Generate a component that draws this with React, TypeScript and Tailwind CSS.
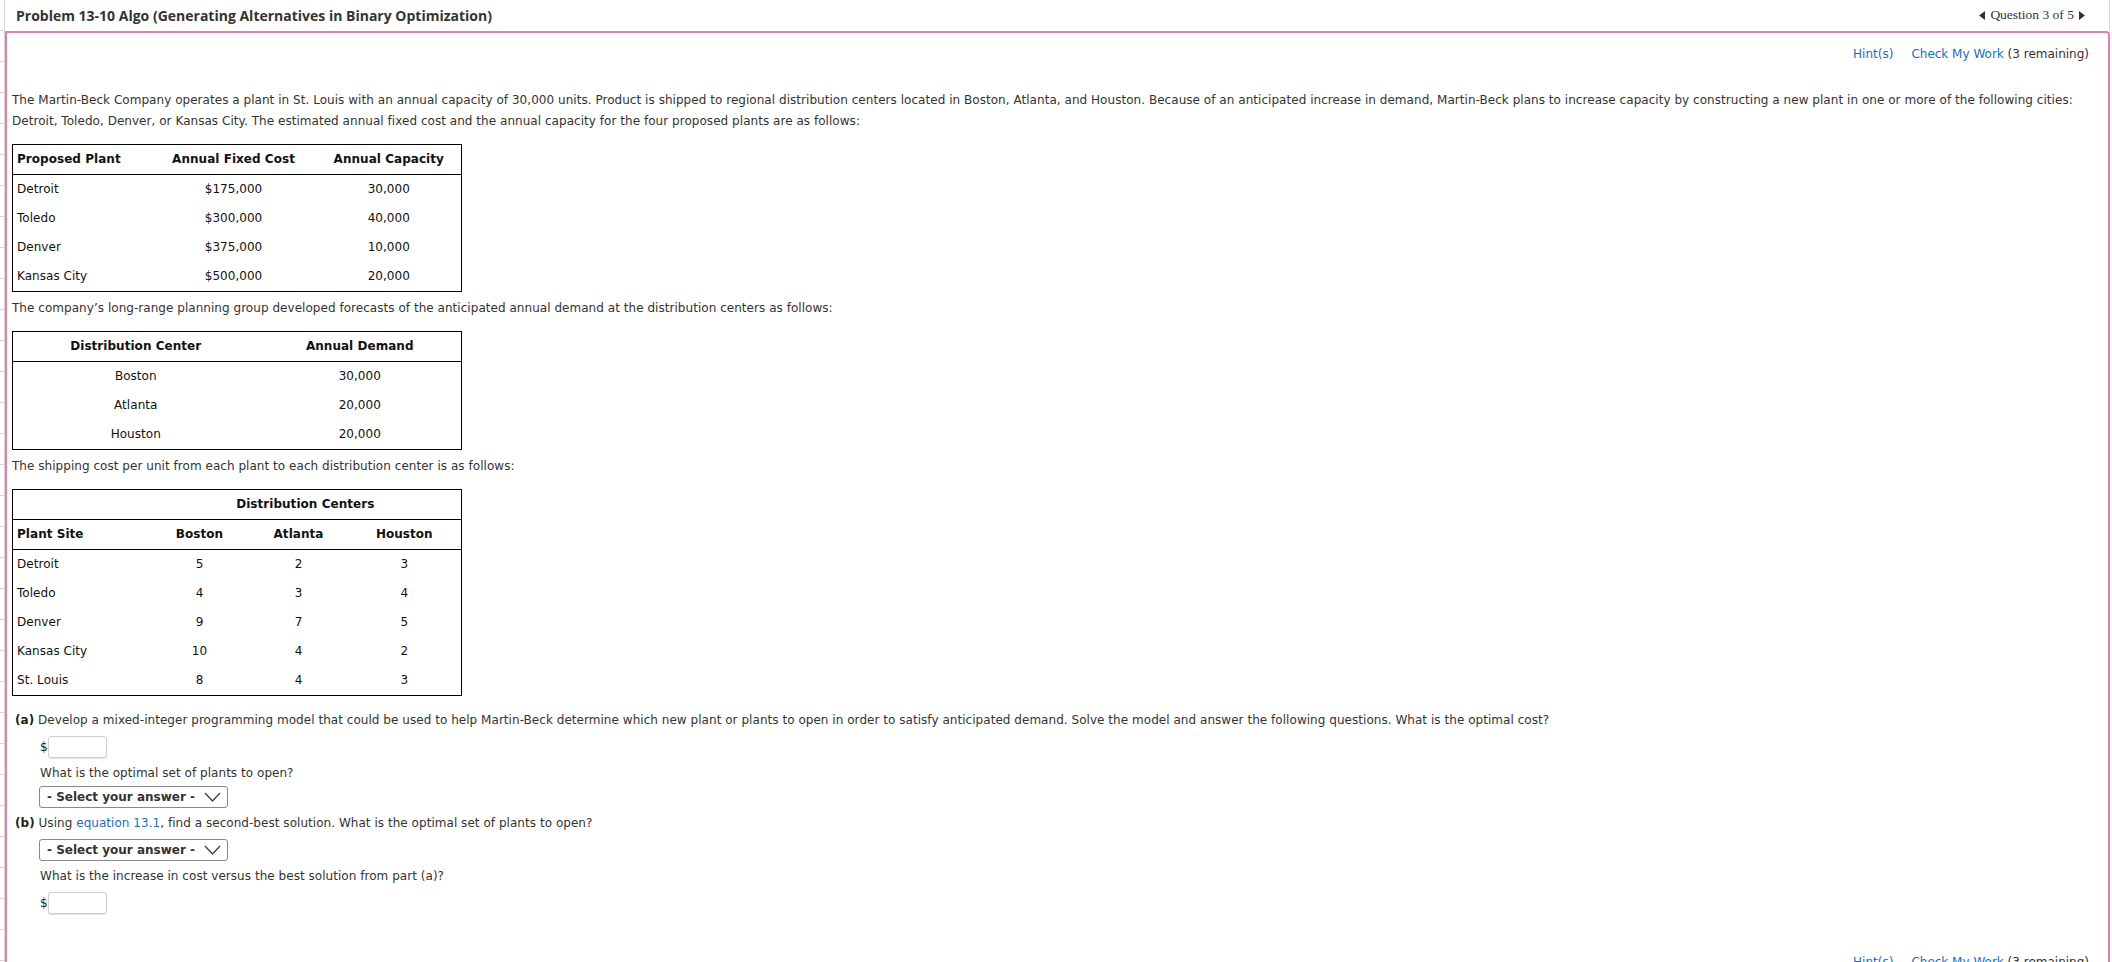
import React from "react";

const body = { fontFamily: '"DejaVu Sans", Verdana, sans-serif' };

function Triangle({ dir }: { dir: "l" | "r" }) {
  return (
    <svg width="6" height="9" viewBox="0 0 6 9" className="shrink-0">
      {dir === "l" ? <polygon points="6,0 6,9 0,4.5" fill="#333" /> : <polygon points="0,0 0,9 6,4.5" fill="#333" />}
    </svg>
  );
}

function Chevron() {
  return (
    <svg width="17" height="10" viewBox="0 0 17 10" className="shrink-0">
      <polyline points="1,1 8.5,9 16,1" fill="none" stroke="#444" strokeWidth="1.4" />
    </svg>
  );
}

function SelectBox() {
  return (
    <div className="w-[189px] h-[22px] border border-[#8a8a8a] rounded-[3px] flex items-center pl-[7px] pr-[6px] gap-[9px] bg-white tracking-normal">
      <span className="font-bold text-[12px] text-[#333] leading-none whitespace-nowrap">- Select your answer -</span>
      <Chevron />
    </div>
  );
}

function DollarInput() {
  return (
    <div className="flex items-center text-[12px] text-[#222]">
      <span className="w-[8px]">$</span>
      <div className="w-[59px] h-[22px] border border-[#cfcfcf] rounded-[3px] bg-white shadow-[0_1px_1px_rgba(0,0,0,0.12)]" />
    </div>
  );
}

function HintRow() {
  return (
    <div className="flex justify-end items-center gap-[18px] pr-[19px] h-[21px] leading-[21px] text-[12px] tracking-normal">
      <span className="text-[#1a6ec2]">Hint(s)</span>
      <span className="whitespace-nowrap">
        <span className="text-[#1a6ec2]">Check My Work</span>
        <span className="text-[#333]"> (3 remaining)</span>
      </span>
    </div>
  );
}

const cell = "px-[4px] py-[4px] leading-[21px] font-normal";

export default function App() {
  const ticks = Array.from({ length: 31 });
  return (
    <div className="w-[2112px] h-[962px] overflow-hidden bg-white flex text-[#333]" style={body}>
      <div className="w-[5px] shrink-0 border-r border-[#d6d6d6] flex flex-col">
        {ticks.map((_, i) => (
          <div key={i} className="h-[31px] shrink-0 border-b border-[#d6d6d6]" />
        ))}
      </div>
      <div className="flex-1 min-w-0 flex flex-col">
        <header className="h-[31px] shrink-0 mr-[2px] border-r border-[#d6d6d6] flex items-center justify-between pl-[11px] pr-[24px]">
          <h1 className="text-[14px] font-bold text-[#333] leading-none" style={{ fontFamily: '"Open Sans", sans-serif' }}>
            Problem 13-10 Algo (Generating Alternatives in Binary Optimization)
          </h1>
          <div className="flex items-center gap-[5px] text-[13.5px] text-[#333]" style={{ fontFamily: '"Liberation Serif", serif' }}>
            <Triangle dir="l" />
            <span>Question 3 of 5</span>
            <Triangle dir="r" />
          </div>
        </header>
        <section className="flex-1 mr-[2px] border-2 border-[#e77ba9] rounded-tr-[4px] pt-[11px] text-[12px] tracking-[0.04px]">
          <HintRow />
          <p className="mt-[25px] pl-[5px] pr-[19px] leading-[21px]">
            The Martin-Beck Company operates a plant in St. Louis with an annual capacity of 30,000 units. Product is shipped to regional distribution centers located in Boston, Atlanta, and Houston. Because of an anticipated increase in demand, Martin-Beck plans to increase capacity by constructing a new plant in one or more of the following cities: Detroit, Toledo, Denver, or Kansas City. The estimated annual fixed cost and the annual capacity for the four proposed plants are as follows:
          </p>

          <div className="pl-[5px] mt-[12px]">
            <table className="table-fixed border-collapse border border-black w-[449px] text-[#111]">
              <colgroup>
                <col className="w-[138px]" />
                <col className="w-[166px]" />
                <col className="w-[145px]" />
              </colgroup>
              <thead>
                <tr className="border-b border-black">
                  <th className={`${cell} !font-bold text-left`}>Proposed Plant</th>
                  <th className={`${cell} !font-bold text-center`}>Annual Fixed Cost</th>
                  <th className={`${cell} !font-bold text-center`}>Annual Capacity</th>
                </tr>
              </thead>
              <tbody>
                {[
                  ["Detroit", "$175,000", "30,000"],
                  ["Toledo", "$300,000", "40,000"],
                  ["Denver", "$375,000", "10,000"],
                  ["Kansas City", "$500,000", "20,000"],
                ].map((r) => (
                  <tr key={r[0]}>
                    <td className={`${cell} text-left`}>{r[0]}</td>
                    <td className={`${cell} text-center`}>{r[1]}</td>
                    <td className={`${cell} text-center`}>{r[2]}</td>
                  </tr>
                ))}
              </tbody>
            </table>
          </div>

          <p className="mt-[6px] mb-[12px] pl-[5px] leading-[21px]">
            The company’s long-range planning group developed forecasts of the anticipated annual demand at the distribution centers as follows:
          </p>

          <div className="pl-[5px]">
            <table className="table-fixed border-collapse border border-black w-[449px] text-[#111]">
              <colgroup>
                <col className="w-[246px]" />
                <col className="w-[203px]" />
              </colgroup>
              <thead>
                <tr className="border-b border-black">
                  <th className={`${cell} !font-bold text-center`}>Distribution Center</th>
                  <th className={`${cell} !font-bold text-center`}>Annual Demand</th>
                </tr>
              </thead>
              <tbody>
                {[
                  ["Boston", "30,000"],
                  ["Atlanta", "20,000"],
                  ["Houston", "20,000"],
                ].map((r) => (
                  <tr key={r[0]}>
                    <td className={`${cell} text-center`}>{r[0]}</td>
                    <td className={`${cell} text-center`}>{r[1]}</td>
                  </tr>
                ))}
              </tbody>
            </table>
          </div>

          <p className="mt-[6px] mb-[12px] pl-[5px] leading-[21px]">
            The shipping cost per unit from each plant to each distribution center is as follows:
          </p>

          <div className="pl-[5px]">
            <table className="table-fixed border-collapse border border-black w-[449px] text-[#111]">
              <colgroup>
                <col className="w-[137px]" />
                <col className="w-[100px]" />
                <col className="w-[98px]" />
                <col className="w-[114px]" />
              </colgroup>
              <thead>
                <tr className="border-b border-black">
                  <th className={cell}></th>
                  <th colSpan={3} className={`${cell} !font-bold text-center`}>Distribution Centers</th>
                </tr>
                <tr className="border-b border-black">
                  <th className={`${cell} !font-bold text-left`}>Plant Site</th>
                  <th className={`${cell} !font-bold text-center`}>Boston</th>
                  <th className={`${cell} !font-bold text-center`}>Atlanta</th>
                  <th className={`${cell} !font-bold text-center`}>Houston</th>
                </tr>
              </thead>
              <tbody>
                {[
                  ["Detroit", "5", "2", "3"],
                  ["Toledo", "4", "3", "4"],
                  ["Denver", "9", "7", "5"],
                  ["Kansas City", "10", "4", "2"],
                  ["St. Louis", "8", "4", "3"],
                ].map((r) => (
                  <tr key={r[0]}>
                    <td className={`${cell} text-left`}>{r[0]}</td>
                    <td className={`${cell} text-center`}>{r[1]}</td>
                    <td className={`${cell} text-center`}>{r[2]}</td>
                    <td className={`${cell} text-center`}>{r[3]}</td>
                  </tr>
                ))}
              </tbody>
            </table>
          </div>

          <p className="mt-[14px] pl-[8px] leading-[21px]">
            <span className="font-bold text-[#222]">(a)</span> Develop a mixed-integer programming model that could be used to help Martin-Beck determine which new plant or plants to open in order to satisfy anticipated demand. Solve the model and answer the following questions. What is the optimal cost?
          </p>
          <div className="pl-[33px] flex flex-col items-start">
            <div className="mt-[5px]">
              <DollarInput />
            </div>
            <p className="mt-[5px] leading-[21px]">What is the optimal set of plants to open?</p>
            <div className="mt-[2px] -ml-[1px]">
              <SelectBox />
            </div>
          </div>
          <p className="mt-[5px] pl-[8px] leading-[21px]">
            <span className="font-bold text-[#222]">(b)</span> Using <span className="text-[#1a6ec2]">equation 13.1</span>, find a second-best solution. What is the optimal set of plants to open?
          </p>
          <div className="pl-[33px] flex flex-col items-start">
            <div className="mt-[5px] -ml-[1px]">
              <SelectBox />
            </div>
            <p className="mt-[5px] leading-[21px]">What is the increase in cost versus the best solution from part (a)?</p>
            <div className="mt-[5px]">
              <DollarInput />
            </div>
          </div>
          <div className="mt-[38px]">
            <HintRow />
          </div>
        </section>
      </div>
    </div>
  );
}
